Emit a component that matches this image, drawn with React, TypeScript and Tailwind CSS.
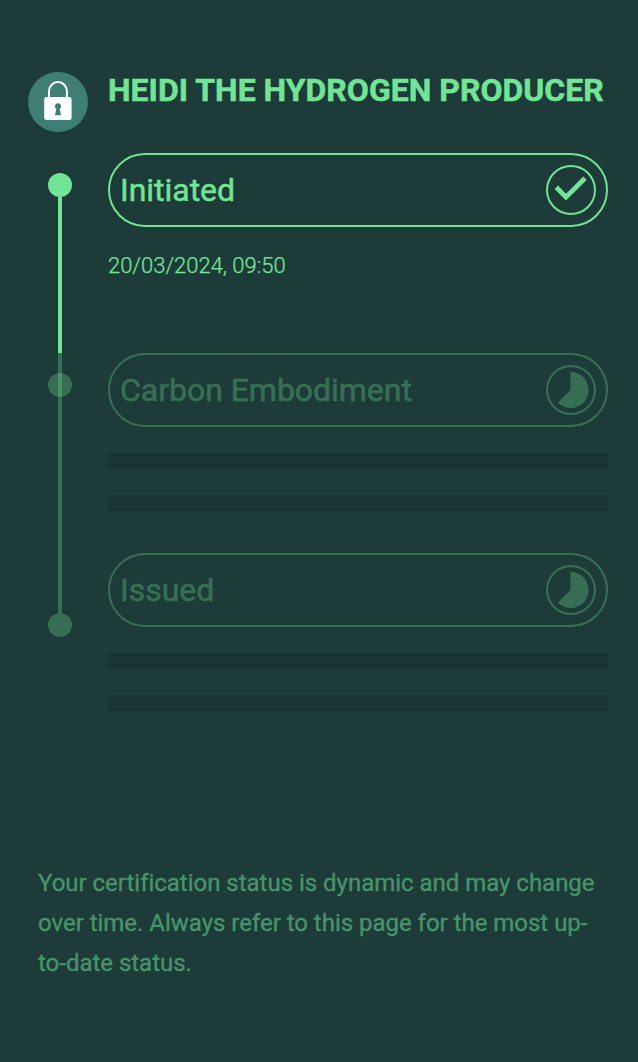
type Step = { title: string; date?: string };

const steps: Step[] = [
  { title: "Initiated", date: "20/03/2024, 09:50" },
  { title: "Carbon Embodiment" },
  { title: "Issued" },
];

function LockBadge() {
  return (
    <div className="ml-7 mt-[72px] h-[60px] w-[60px] shrink-0 rounded-full bg-[#3f7e75]">
      <svg viewBox="0 0 60 60" className="h-full w-full">
        <path d="M21 26V19a8.9 8.9 0 0 1 17.9 0v7" fill="none" stroke="#fff" strokeWidth="2" />
        <rect x="16.2" y="25" width="27.4" height="23" rx="2.5" fill="#fff" />
        <path d="M30 31.2a3.1 3.1 0 0 1 1.7 5.7l1.3 6.4h-6l1.3-6.4a3.1 3.1 0 0 1 1.7-5.7z" fill="#3f7e75" />
      </svg>
    </div>
  );
}

function StatusIcon({ done }: { done: boolean }) {
  return (
    <svg viewBox="0 0 50 50" className="h-[50px] w-[50px] shrink-0">
      <circle cx="25" cy="25" r="24" fill="none" stroke="currentColor" strokeWidth="2" />
      {done ? (
        <path d="M10.3 22.3 20 32.2 39 13.3" fill="none" stroke="currentColor" strokeWidth="4.8" />
      ) : (
        <path d="M24.5 25V7a18 18 0 1 1-12.7 30.7z" fill="currentColor" />
      )}
    </svg>
  );
}

function StepCard({ step }: { step: Step }) {
  const done = Boolean(step.date);
  return (
    <li className="h-[200px]">
      <div className={done ? "text-[#72e495]" : "text-[#72e495] opacity-[0.31]"}>
        <div className="flex h-[74px] items-center justify-between rounded-full border-2 border-current pl-[10px] pr-[10px]">
          <span className="text-[32px] leading-10 tracking-[-0.03px] [-webkit-text-stroke:0.5px_currentColor]">{step.title}</span>
          <StatusIcon done={done} />
        </div>
      </div>
      {done ? (
        <p className="mt-[23px] text-[22px] leading-8 font-light tracking-[-0.03px] text-[#72e495] [-webkit-text-stroke:0.25px_currentColor]">{step.date}</p>
      ) : (
        <div className="mt-[26px] flex flex-col gap-[26px]">
          <div className="h-4 bg-[#193434]" />
          <div className="h-4 bg-[#193434]" />
        </div>
      )}
    </li>
  );
}

function Timeline() {
  return (
    <div className="ml-12 mt-5 flex w-6 shrink-0 flex-col items-center">
      <div className="h-6 w-6 rounded-full bg-[#72e495]" />
      <div className="h-[156px] w-1 bg-[#72e495]" />
      <div className="relative h-[260px] w-1 bg-[#72e495]/31">
        <div className="absolute -left-[10px] top-5 h-6 w-6 rounded-full bg-[#72e495]/31" />
      </div>
      <div className="h-6 w-6 rounded-full bg-[#72e495]/31" />
    </div>
  );
}

export default function App() {
  return (
    <main className="flex h-[1062px] w-[638px] flex-col overflow-hidden bg-[#1d3b39] font-['Roboto',sans-serif]">
      <header className="flex h-[153px] shrink-0">
        <LockBadge />
        <h1 className="ml-5 mt-[70px] whitespace-nowrap text-[32px] leading-10 font-bold text-[#72e495] [-webkit-text-stroke:0.5px_currentColor]">
          HEIDI THE HYDROGEN PRODUCER
        </h1>
      </header>
      <section className="flex h-[600px] shrink-0">
        <Timeline />
        <ul className="ml-9 w-[500px]">
          {steps.map((step) => (
            <StepCard key={step.title} step={step} />
          ))}
        </ul>
      </section>
      <p className="ml-[38px] mt-[110px] w-[562px] text-2xl leading-10 tracking-[-0.02px] text-[#48946a] [-webkit-text-stroke:0.35px_currentColor]">
        Your certification status is dynamic and may change over time. Always refer to this page for the most up-to-date status.
      </p>
    </main>
  );
}
